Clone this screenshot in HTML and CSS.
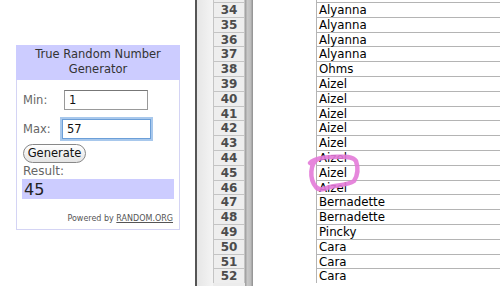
FILE: index.html
```html
<!DOCTYPE html>
<html lang="en">
<head>
    <meta charset="UTF-8">
    <title>True Random Number Generator</title>
    <link rel="stylesheet" href="styles.css">
</head>
<body>
  <div class="page">
    <div class="left">
      <div class="widget">
        <div class="widget-title">True Random Number<br>Generator</div>
        <div class="widget-body">
          <div class="field"><span class="lbl">Min:</span><input class="num min" type="text" value="1"></div>
          <div class="field"><span class="lbl">Max:</span><input class="num max" type="text" value="57"></div>
          <button class="gen">Generate</button>
          <div class="res-label">Result:</div>
          <div class="result">45</div>
          <div class="powered">Powered by <u>RANDOM.ORG</u></div>
        </div>
      </div>
    </div>
    <div class="divider"></div>
    <div class="sheet">
      <div class="gutter"></div>
      <div class="heads" id="heads"></div>
      <div class="split"></div>
      <div class="blank"></div>
      <div class="cells" id="cells"></div>
      <svg class="mark" width="70" height="44" viewBox="0 0 70 44">
        <path d="M14 8 C 6 12, 5 28, 12 36 C 16 41, 22 37, 26 36 C 34 34, 44 34, 50 30 C 54 24, 54 16, 52 10 C 48 4, 36 6, 28 6 C 20 6, 10 8, 6 12" fill="none" stroke="#e37ad8" stroke-width="4.5" stroke-linecap="round" opacity="0.9"/>
      </svg>
    </div>
  </div>
  <script>
    var names = ["Alyanna","Alyanna","Alyanna","Alyanna","Ohms","Aizel","Aizel","Aizel","Aizel","Aizel","Aizel","Aizel","Aizel","Bernadette","Bernadette","Pincky","Cara","Cara","Cara"];
    var heads = document.getElementById("heads");
    var cells = document.getElementById("cells");
    // top row is only a sliver at the window edge
    heads.innerHTML = '<div class="hrow"></div>';
    cells.innerHTML = '<div class="crow"></div>';
    names.forEach(function (n, i) {
        heads.innerHTML += '<div class="hrow">' + (34 + i) + '</div>';
        cells.innerHTML += '<div class="crow">' + n + '</div>';
    });
  </script>
</body>
</html>
```
FILE: styles.css
```css
body { margin: 0; background: #fff; font-family: "DejaVu Sans", Verdana, sans-serif; }
.page { display: flex; width: 500px; height: 286px; overflow: hidden; }

.left { width: 195px; flex: none; }
.widget { margin: 45px 0 0 16px; width: 162px; border: 1px solid #d4d4f4; border-top: none; height: 184px; }
.widget-title { background: #ccccff; color: #333; font-size: 11.5px; line-height: 15px; text-align: center; padding: 2px 0 3px; margin: 0 -1px; }
.widget-body { padding: 0 5px 0 6px; color: #666; font-size: 11.5px; }
.field { display: flex; align-items: center; height: 29px; }
.field:first-child { margin-top: 5px; }
.lbl { width: 40px; }
.num { font-family: inherit; font-size: 11.5px; color: #111; padding: 1px 4px; height: 16px; box-sizing: content-box; border: 1px solid #999; border-top-color: #777; outline: none; }
.min { width: 74px; margin-left: 1px; }
.max { width: 79px; margin-left: -1px; border-color: #6c9fd8; box-shadow: 0 0 0 2px #a8c8ec; }
.gen { margin-top: 1px; font-family: inherit; font-size: 11.5px; color: #111; padding: 1px 3px 2px; height: 19px; width: 63px; border: 1px solid #888; border-radius: 10px; background: linear-gradient(#fff, #e4e4e4); }
.res-label { font-size: 12px; margin-top: 1px; line-height: 14px; }
.result { background: #ccccff; color: #222; font-size: 16px; height: 20px; line-height: 21px; padding-left: 2px; margin: 1px 0 0 -1px; width: 150px; }
.powered { text-align: right; font-size: 8px; color: #555; margin-top: 15px; padding-right: 1px; }

.divider { width: 2px; flex: none; background: #555; }
.sheet { position: relative; flex: 1; display: flex; background: #fff; }
.gutter { width: 16px; flex: none; background: linear-gradient(90deg, #e6e6e6, #f4f4f4); }
.heads, .cells { margin-top: -12.8px; }
.heads { width: 32px; flex: none; background: #ececec; }
.hrow { height: 13.8px; border-top: 1px solid #c4c4c4; border-left: 1px solid #c4c4c4; border-right: 1px solid #c4c4c4; text-align: center; font-size: 12px; font-weight: bold; line-height: 15px; color: #4c4c4c; background: #eeeeee; }
.split { width: 8px; flex: none; background: linear-gradient(90deg, #9a9a9a, #c8c8c8 30%, #bdbdbd 70%, #8d8d8d); }
.blank { width: 63px; flex: none; }
.cells { flex: 1; }
.crow { height: 13.8px; border-top: 1px solid #b4b4b4; border-left: 1px solid #b4b4b4; font-size: 11.8px; line-height: 15px; color: #000; padding-left: 2px; }
.mark { position: absolute; left: 107px; top: 151px; }
```
